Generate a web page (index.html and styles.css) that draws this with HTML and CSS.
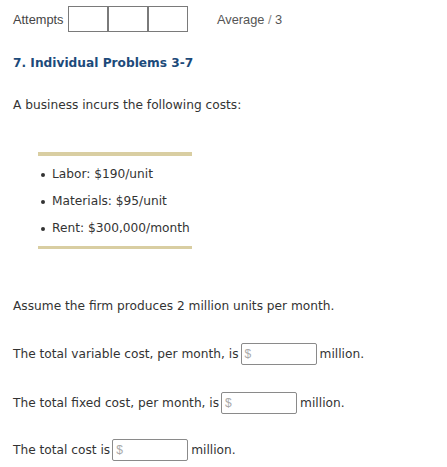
FILE: index.html
```html
<!DOCTYPE html>
<html>
<head>
<meta charset="utf-8">
<link rel="stylesheet" href="styles.css">
</head>
<body>
<div class="page">
  <div class="topbar">
    <span class="label">Attempts</span>
    <div class="attempts">
      <div class="cell"></div><div class="cell"></div><div class="cell"></div>
    </div>
    <span class="average">Average <span class="slash">/</span> 3</span>
  </div>
  <h2 class="heading">7. Individual Problems 3-7</h2>
  <p class="intro">A business incurs the following costs:</p>
  <div class="costs">
    <ul class="cost-list">
      <li>Labor: $190/unit</li>
      <li>Materials: $95/unit</li>
      <li>Rent: $300,000/month</li>
    </ul>
  </div>
  <p class="assume">Assume the firm produces 2 million units per month.</p>
  <div class="qrow q1">The total variable cost, per month, is<span class="field"><span class="ph">$</span></span>million.</div>
  <div class="qrow q2">The total fixed cost, per month, is<span class="field"><span class="ph">$</span></span>million.</div>
  <div class="qrow q3">The total cost is<span class="field"><span class="ph">$</span></span>million.</div>
</div>
</body>
</html>
```
FILE: styles.css
```css
html, body { margin: 0; padding: 0; background: #fff; }
.page {
  padding: 6px 0 0 13px;
  font-family: "DejaVu Sans", Verdana, sans-serif;
  font-size: 12.2px;
  color: #333;
}
.topbar {
  display: flex;
  align-items: center;
  height: 26px;
  font-family: "Liberation Sans", Arial, sans-serif;
  font-size: 12.8px;
  color: #444;
}
.label { width: 55px; }
.attempts {
  display: flex;
  border: 1px solid #7a7a7a;
  height: 24px;
}
.cell { width: 38px; height: 24px; }
.cell + .cell { border-left: 2px solid #7a7a7a; }
.average { margin-left: 29px; color: #555; font-size: 12.8px; }
.slash { color: #888; }
.heading {
  margin: 23px 0 0;
  font-size: 12.2px;
  line-height: 16px;
  font-weight: bold;
  color: #1c4a7a;
}
.intro { margin: 26px 0 0; line-height: 16px; }
.costs {
  margin: 39px 0 0 25px;
  width: 154px;
  border-top: 4px solid #d9cea2;
  border-bottom: 3px solid #d9cea2;
}
.cost-list {
  list-style: none;
  margin: 0;
  padding: 5px 0 4px 0;
}
.cost-list li {
  line-height: 27px;
  padding-left: 14px;
  position: relative;
}
.cost-list li::before {
  content: "";
  position: absolute;
  left: 3px;
  top: 12px;
  width: 4px;
  height: 4px;
  border-radius: 50%;
  background: #333;
}
.assume { margin: 49px 0 0; line-height: 16px; }
.qrow {
  display: flex;
  align-items: center;
  height: 22px;
  line-height: 16px;
}
.q1 { margin-top: 29px; }
.q2 { margin-top: 27px; }
.q3 { margin-top: 25px; }
.field {
  display: inline-flex;
  align-items: center;
  box-sizing: border-box;
  width: 76px;
  height: 22px;
  margin: 0 3px 0 2px;
  border: 1px solid #8a8a8a;
  border-radius: 2px;
  padding-left: 3px;
}
.ph {
  font-family: "Liberation Sans", Arial, sans-serif;
  font-size: 12px;
  color: #aaa;
}
```
